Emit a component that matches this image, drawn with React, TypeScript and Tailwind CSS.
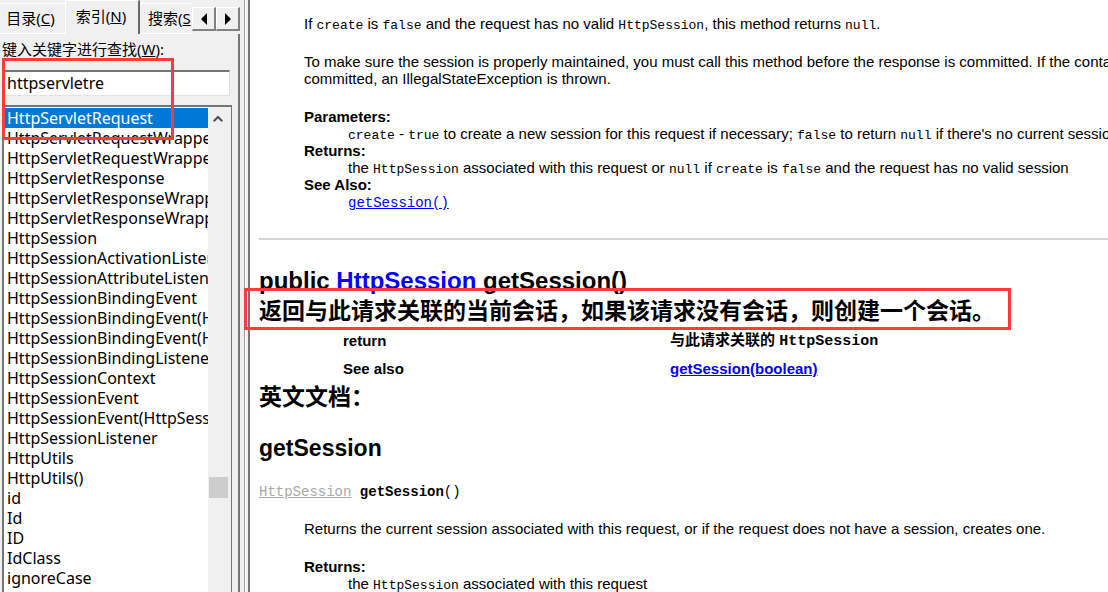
import React from "react";

const entries = [
  "HttpServletRequest",
  "HttpServletRequestWrapper",
  "HttpServletRequestWrapper(HttpServletRequest)",
  "HttpServletResponse",
  "HttpServletResponseWrapper",
  "HttpServletResponseWrapper(HttpServletResponse)",
  "HttpSession",
  "HttpSessionActivationListener",
  "HttpSessionAttributeListener",
  "HttpSessionBindingEvent",
  "HttpSessionBindingEvent(HttpSession, String)",
  "HttpSessionBindingEvent(HttpSession, String, Object)",
  "HttpSessionBindingListener",
  "HttpSessionContext",
  "HttpSessionEvent",
  "HttpSessionEvent(HttpSession)",
  "HttpSessionListener",
  "HttpUtils",
  "HttpUtils()",
  "id",
  "Id",
  "ID",
  "IdClass",
  "ignoreCase",
];

function Code({ children }: { children: React.ReactNode }) {
  return <code className="font-['Liberation_Mono',monospace] text-[13px] leading-none">{children}</code>;
}

function Signature({ children }: { children: React.ReactNode }) {
  return <code className="font-['Liberation_Mono',monospace] text-[14px] leading-none">{children}</code>;
}

function Sidebar() {
  return (
    <aside className="relative flex h-full w-[240px] shrink-0 flex-col bg-[#f0f0f0] font-['Noto_Sans','Noto_Sans_CJK_SC',sans-serif] text-[15px]">
      <div role="tablist" className="flex h-[34px] shrink-0 items-end overflow-hidden whitespace-nowrap">
        <button role="tab" aria-selected="false" className="h-[31px] w-[65px] shrink-0 border-y border-white pr-[4px]">
          目录(<u>C</u>)
        </button>
        <button role="tab" aria-selected="true" className="h-[34px] w-[75px] shrink-0 border-t border-r-2 border-l border-t-white border-r-[#696969] border-l-white pr-[2px] pb-[2px]">
          索引(<u>N</u>)
        </button>
        <button role="tab" aria-selected="false" className="h-[31px] w-[52px] shrink-0 overflow-hidden border-y border-white pl-2 text-left">
          搜索(<u>S</u>
        </button>
        <div className="flex self-start pt-[7px]">
          <button aria-label="Scroll tabs left" className="grid h-[24px] w-[24px] place-items-center border-t border-r-2 border-b-2 border-l border-t-white border-r-[#808080] border-b-[#808080] border-l-white">
            <svg width="8" height="12" viewBox="0 0 8 12"><path d="M7 0v12L1 6z" /></svg>
          </button>
          <button aria-label="Scroll tabs right" className="grid h-[24px] w-[24px] place-items-center border-t border-r-2 border-b-2 border-l border-t-white border-r-[#808080] border-b-[#808080] border-l-white">
            <svg width="8" height="12" viewBox="0 0 8 12"><path d="M1 0v12l6-6z" /></svg>
          </button>
        </div>
      </div>
      <div className="flex min-h-0 flex-1 flex-col border-r-2 border-[#757575]">
        <label htmlFor="keyword" className="pt-[4px] pl-[2px] leading-[22px]">
          键入关键字进行查找(<u>W</u>):
        </label>
        <input
          id="keyword"
          defaultValue="httpservletre"
          className="mt-[10px] ml-[2px] h-[26px] w-[228px] shrink-0 border-t-2 border-r border-b border-l-2 border-t-[#757575] border-r-[#e3e3e3] border-b-[#e3e3e3] border-l-[#757575] bg-white pb-[2px] pl-[3px] text-[16px] outline-none"
        />
        <div className="mt-[9px] ml-[2px] flex min-h-0 w-[230px] flex-1 border-t-2 border-r border-l-2 border-[#757575] bg-white">
          <ul className="min-w-0 flex-1 overflow-hidden pt-px text-[16px] whitespace-nowrap">
            {entries.map((e, i) => (
              <li key={e} className={i === 0 ? "h-5 bg-[#0078d7] pl-[3px] leading-5 text-white" : "h-5 pl-[3px] leading-5"}>
                {e}
              </li>
            ))}
          </ul>
          <div className="flex w-[23px] shrink-0 flex-col bg-[#f0f0f0] pr-[3px] pl-px">
            <svg className="mt-[7px] ml-[4px]" width="10" height="10" viewBox="0 0 10 10" fill="none" stroke="#505050" strokeWidth="2">
              <path d="M0.7 7.3L5 3l4.3 4.3" />
            </svg>
            <div className="mt-[353px] h-[21px] shrink-0 bg-[#cdcdcd]" />
          </div>
        </div>
      </div>
      <div className="absolute top-[58px] left-[2px] h-[82px] w-[172px] border-3 border-[#ff3b3b]" />
    </aside>
  );
}

function Doc() {
  return (
    <main className="h-full min-w-0 flex-1 border-l-2 border-[#757575] bg-white pl-[9px] font-['Liberation_Sans','Noto_Sans_CJK_SC',sans-serif] text-[15px] leading-[17px]">
      <div className="ml-[45px] pt-[15px] whitespace-nowrap">
        <p>If <Code>create</Code> is <Code>false</Code> and the request has no valid <Code>HttpSession</Code>, this method returns <Code>null</Code>.</p>
        <p className="mt-[21px]">
          To make sure the session is properly maintained, you must call this method before the response is committed. If the container is using
          <br />
          committed, an IllegalStateException is thrown.
        </p>
        <dl className="mt-[21px]">
          <dt className="font-bold">Parameters:</dt>
          <dd className="ml-[44px]"><Code>create</Code> - <Code>true</Code> to create a new session for this request if necessary; <Code>false</Code> to return <Code>null</Code> if there's no current session</dd>
          <dt className="font-bold">Returns:</dt>
          <dd className="ml-[44px]">the <Code>HttpSession</Code> associated with this request or <Code>null</Code> if <Code>create</Code> is <Code>false</Code> and the request has no valid session</dd>
          <dt className="font-bold">See Also:</dt>
          <dd className="ml-[44px]"><a href="#getSession" className="text-[#0000ff] underline"><Signature>getSession()</Signature></a></dd>
        </dl>
      </div>
      <hr className="mt-[28px] border-t-2 border-[#d4d4d4]" />
      <h2 className="mt-[26px] text-[24px] leading-[30px] font-bold whitespace-nowrap">
        public <a href="#HttpSession" className="text-[#0000ff] underline decoration-1">HttpSession</a> getSession()
        <span className="relative block text-[23px]">
          返回与此请求关联的当前会话，如果该请求没有会话，则创建一个会话。
          <span className="absolute top-[-8px] left-[-15px] h-[42px] w-[767px] border-3 border-[#ff3b3b]" />
        </span>
      </h2>
      <table className="ml-[84px] font-bold">
        <tbody>
          <tr className="h-[28px] align-middle">
            <th className="w-[327px] text-left">return</th>
            <td>与此请求关联的 <code className="font-['Liberation_Mono',monospace] text-[15px] leading-none">HttpSession</code></td>
          </tr>
          <tr className="h-[28px] align-middle">
            <th className="text-left">See also</th>
            <td><a href="#getSessionBoolean" className="text-[#0000ff] underline">getSession(boolean)</a></td>
          </tr>
        </tbody>
      </table>
      <h2 className="text-[23px] leading-[30px] font-bold">英文文档：</h2>
      <h2 id="getSession" className="mt-[21px] text-[23px] leading-[30px] font-bold">getSession</h2>
      <p className="mt-[19px]"><Signature><a href="#HttpSession" className="text-[#a8a8a8] underline">HttpSession</a> <b>getSession</b>()</Signature></p>
      <div className="ml-[45px] whitespace-nowrap">
        <p className="mt-[21px]">Returns the current session associated with this request, or if the request does not have a session, creates one.</p>
        <dl className="mt-[21px]">
          <dt className="font-bold">Returns:</dt>
          <dd className="ml-[44px]">the <Code>HttpSession</Code> associated with this request</dd>
        </dl>
      </div>
    </main>
  );
}

export default function App() {
  return (
    <div className="flex h-screen w-full overflow-hidden bg-[#f0f0f0] text-black">
      <Sidebar />
      <div className="ml-1 flex w-1 shrink-0 border-l border-[#a0a0a0]">
        <div className="w-px bg-white" />
      </div>
      <Doc />
    </div>
  );
}
